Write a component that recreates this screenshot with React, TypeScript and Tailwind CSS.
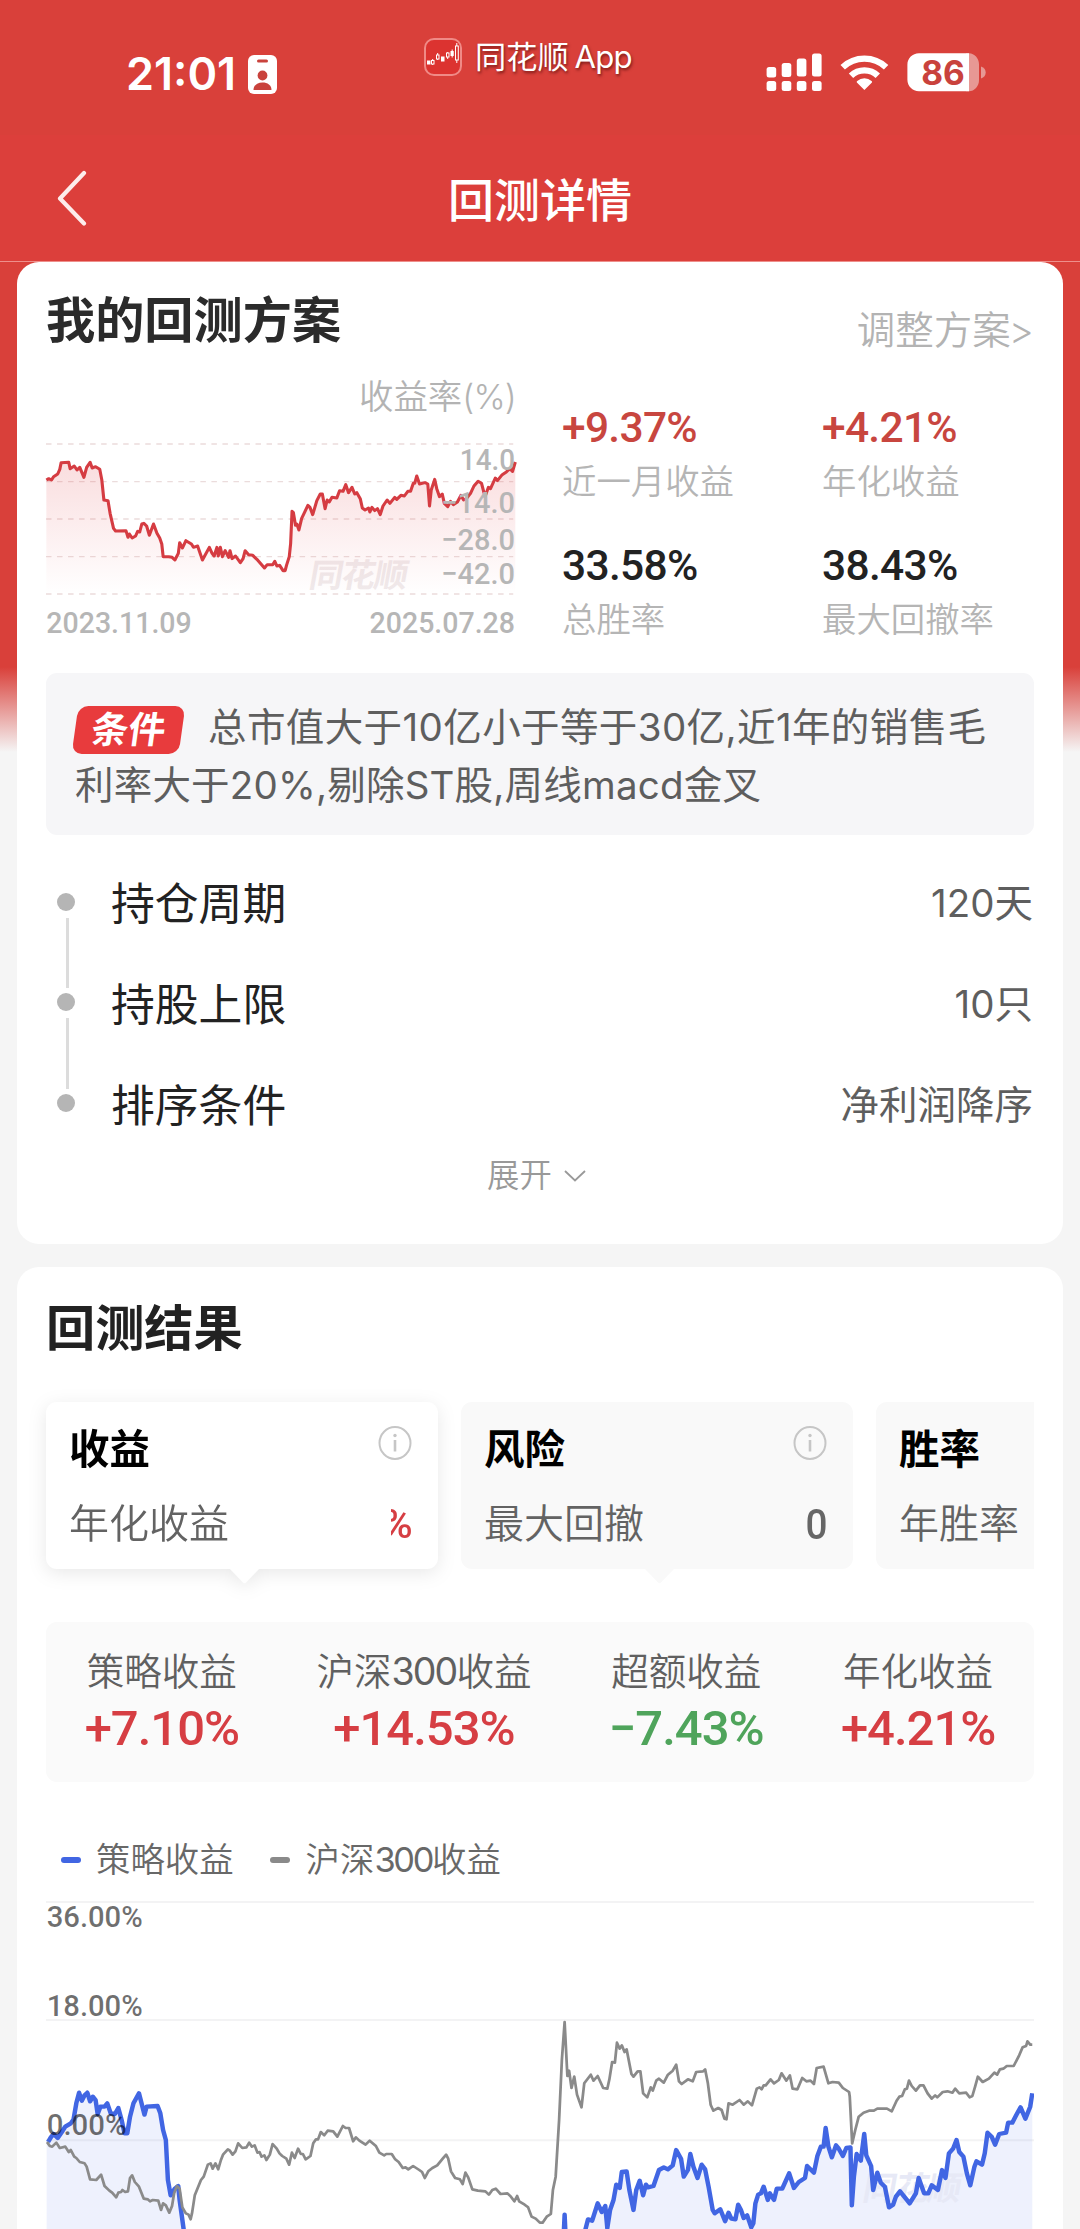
import React from 'react';

const PLAN_CURVE =
  '135,630 142,626 150,630 156,620 168,612 174,598 178,578 200,577 204,596 216,588 224,600 232,592 244,622 252,592 262,577 268,594 278,590 290,598 296,630 302,690 314,692 320,730 330,775 336,783 366,782 372,802 376,792 384,804 394,798 400,784 406,786 412,762 418,760 426,768 434,796 446,762 456,790 464,804 470,822 474,860 490,860 500,862 508,870 518,850 522,818 530,834 540,812 556,822 562,832 574,828 588,870 608,832 616,850 622,858 630,832 634,858 640,832 646,860 654,842 664,862 668,842 674,866 684,858 698,878 706,866 712,842 722,854 734,856 746,868 768,894 776,884 792,884 798,874 804,888 812,886 822,902 828,902 832,886 840,860 844,820 848,724 852,728 858,766 862,762 868,780 876,745 884,728 894,706 900,712 908,734 920,692 930,672 936,672 944,716 950,690 956,696 964,682 978,684 986,662 996,664 1004,644 1012,668 1022,652 1030,672 1036,668 1046,686 1052,714 1060,720 1070,714 1074,726 1080,712 1088,722 1096,716 1104,734 1112,708 1124,690 1132,700 1146,682 1152,688 1164,676 1174,678 1184,664 1192,664 1200,640 1204,640 1210,618 1218,642 1234,638 1242,642 1247,708 1252,660 1262,628 1268,656 1276,680 1284,672 1290,700 1300,710 1308,694 1316,704 1328,696 1338,676 1346,690 1354,686 1366,670 1376,648 1388,634 1398,640 1408,680 1418,652 1424,656 1438,624 1444,632 1458,614 1470,606 1480,596 1488,604 1496,576';

const INDEX_2024 =
  '137,1026 145,1038 152,1040 164,1028 174,1044 190,1040 200,1056 206,1050 216,1070 222,1074 232,1086 246,1090 252,1100 262,1138 280,1140 294,1124 304,1158 318,1172 326,1178 338,1192 344,1178 352,1176 356,1170 364,1176 372,1174 378,1134 384,1126 392,1146 404,1160 418,1196 430,1198 436,1204 444,1200 460,1202 468,1230 474,1210 482,1216 492,1238 500,1218 506,1180 514,1158 522,1166 530,1222 540,1240 548,1244 554,1258 558,1240 566,1186 584,1140 592,1130 604,1094 612,1090 618,1106 626,1090 634,1108 642,1080 648,1064 662,1048 668,1052 676,1064 684,1054 692,1030 704,1044 716,1042 724,1028 732,1040 740,1036 748,1058 754,1056 760,1070 768,1066 774,1080 784,1064 792,1032 804,1046 812,1060 820,1068 832,1076 840,1094 848,1058 856,1074 866,1046 874,1062 880,1062 888,1078 902,1068 910,1030 918,1018 924,1018 932,996 942,1006 952,992 968,994 980,1010 996,978 1004,984 1014,984 1026,1024 1034,1012 1044,1022 1062,1034 1074,1022 1092,1038 1102,1058 1116,1066 1122,1062 1138,1062 1148,1078 1158,1086 1170,1104 1178,1102 1186,1108 1200,1098 1218,1110 1226,1116 1234,1134 1244,1114 1256,1104 1270,1096 1286,1076 1296,1064 1302,1076 1310,1114 1322,1134 1336,1138 1344,1152 1352,1118 1360,1132 1372,1168 1388,1172 1410,1174 1420,1184 1430,1170 1440,1166 1454,1182 1474,1180 1484,1190 1494,1204 1502,1188 1508,1204 1524,1214 1534,1222 1544,1250 1556,1256 1568,1268';

const INDEX_2025 =
  '8,1268 20,1250 32,1242 38,1170 46,1130 56,960 64,780 72,666 80,828 85,812 92,864 100,830 108,884 121,922 129,850 148,824 156,842 168,828 184,864 196,866 202,838 210,786 218,788 224,728 232,746 238,736 246,756 252,748 266,822 272,830 284,814 292,814 300,880 312,892 322,862 328,872 338,842 346,836 360,848 372,824 386,812 396,794 404,844 412,852 430,838 444,844 454,816 474,814 480,808 488,850 496,914 504,932 518,924 528,930 536,956 542,958 548,910 560,914 580,900 592,914 604,904 616,916 630,866 638,862 644,868 650,856 656,856 670,838 680,850 694,840 702,820 716,842 726,826 734,866 748,868 762,834 774,844 786,842 796,852 804,804 824,800 838,850 850,846 868,848 880,864 898,876 900,890 907,1030 916,990 926,950 940,938 956,932 970,932 980,926 1008,926 1022,934 1036,902 1044,890 1052,888 1060,868 1066,866 1072,842 1080,858 1092,872 1104,856 1114,856 1126,880 1138,896 1148,886 1154,892 1170,876 1184,874 1198,878 1206,866 1218,880 1238,878 1248,892 1256,888 1264,860 1272,830 1286,846 1304,836 1320,818 1328,824 1336,808 1346,806 1356,798 1376,798 1392,766 1402,742 1412,738 1416,724 1424,734 1430,734';

const STRATEGY_2024 =
  '140,1026 148,1012 156,1002 168,1014 180,996 190,980 206,970 214,958 222,910 230,878 238,902 246,886 254,878 262,904 270,890 278,900 284,942 292,920 304,920 312,910 322,940 334,942 344,924 354,962 362,1000 370,1000 378,950 388,910 404,880 420,944 426,920 458,918 466,940 474,990 482,1020 488,1140 496,1186 508,1166 518,1158 522,1200 534,1290 560,1400';

const STRATEGY_2025 =
  '60,1400 70,1290 72,1244 74,1290 80,1400 120,1400 132,1290 140,1258 152,1262 168,1210 180,1236 190,1218 196,1284 204,1230 214,1200 222,1154 232,1164 238,1116 252,1114 260,1170 272,1230 280,1170 290,1142 300,1186 308,1154 314,1162 330,1158 346,1110 360,1102 372,1108 386,1096 396,1050 410,1076 418,1130 430,1110 437,1062 446,1100 458,1134 470,1094 480,1108 490,1160 502,1230 508,1240 524,1228 538,1264 548,1238 556,1256 568,1258 576,1214 584,1230 592,1254 602,1246 614,1282 620,1270 626,1210 634,1184 642,1180 650,1160 662,1200 668,1180 680,1200 688,1166 704,1166 724,1120 738,1164 752,1146 770,1134 776,1098 796,1118 806,1068 816,1040 824,1040 830,984 838,1040 848,1072 860,1036 868,1046 880,1068 890,1044 902,1042 906,1216 912,1130 920,1062 932,1082 942,1002 948,1066 962,1098 968,1170 980,1118 990,1148 1002,1160 1014,1222 1026,1214 1034,1190 1046,1174 1060,1192 1074,1210 1092,1180 1100,1134 1116,1180 1128,1180 1138,1156 1156,1170 1168,1110 1178,1134 1188,1060 1200,1046 1210,1020 1218,1056 1230,1070 1240,1120 1250,1156 1262,1100 1268,1084 1284,1094 1292,1060 1300,998 1312,1010 1322,1034 1334,1002 1354,998 1360,968 1372,968 1384,944 1396,922 1410,956 1424,920 1430,880';

// Second-half series start from x = 0 and are moved behind the first half
const shift = (points: string, dx: number) =>
  points
    .split(' ')
    .map((p) => {
      const [x, y] = p.split(',').map(Number);
      return `${x + dx},${y}`;
    })
    .join(' ');

const INDEX_CURVE = `${INDEX_2024} ${shift(INDEX_2025, 1568)}`;
const STRATEGY_CURVE = `${STRATEGY_2024} ${shift(STRATEGY_2025, 1568)}`;

const PLAN_STATS = [
  { value: '+9.37%', label: '近一月收益', color: 'text-[#c8463f]' },
  { value: '+4.21%', label: '年化收益', color: 'text-[#c8463f]' },
  { value: '33.58%', label: '总胜率', color: 'text-[#222222]' },
  { value: '38.43%', label: '最大回撤率', color: 'text-[#222222]' },
];

const PLAN_ROWS = [
  { label: '持仓周期', value: '120天' },
  { label: '持股上限', value: '10只' },
  { label: '排序条件', value: '净利润降序' },
];

const RESULT_STATS = [
  { label: '策略收益', value: '+7.10%', color: 'text-[#d63e43]' },
  {
    label: (
      <>
        沪深<span className="font-normal tracking-[-1.800px]">300</span>收益
      </>
    ),
    value: '+14.53%',
    color: 'text-[#d63e43]',
  },
  { label: '超额收益', value: '−7.43%', color: 'text-[#4fa45b]' },
  { label: '年化收益', value: '+4.21%', color: 'text-[#d63e43]' },
];

const StatusBar: React.FC = () => (
  <div className="flex h-[135px] items-start bg-[#d9403a] text-white">
    <div className="flex w-[424px] items-center gap-[12px] pt-[49px] pl-[126px]">
      <span className="text-[45px] leading-[50px] font-semibold">21:01</span>
      <svg width="29" height="39" viewBox="0 0 29 39">
        <rect width="29" height="39" rx="6" fill="#fff" />
        <rect x="9" y="4.5" width="11" height="3" rx="1.5" fill="#c9423c" />
        <circle cx="14.5" cy="20.5" r="4.9" fill="#c9423c" />
        <path d="M5.5 35c0-5 4-7.6 9-7.6s9 2.6 9 7.6z" fill="#c9423c" />
      </svg>
    </div>
    <div className="flex w-[342px] items-center gap-[13px] pt-[37px]">
      <svg width="38" height="38" viewBox="0 0 38 38" fill="none">
        <rect x="1" y="1" width="36" height="36" rx="9" fill="#dc3330" stroke="#f08a86" strokeWidth="2" />
        <g stroke="#fff" strokeWidth="1">
          <rect x="3.5" y="23" width="2.5" height="3" fill="#fff" />
          <path d="M8.7 21v6" />
          <rect x="7.5" y="22.5" width="2.5" height="3.5" fill="#dc3330" />
          <path d="M13.7 15v7" />
          <rect x="12.5" y="17" width="2.5" height="4" fill="#dc3330" />
          <rect x="17.5" y="19" width="2.5" height="4" fill="#fff" />
          <path d="M23.7 14v7" />
          <rect x="22.5" y="15" width="2.5" height="4" fill="#dc3330" />
          <path d="M28.2 11.5v8" />
          <rect x="27" y="13.5" width="2.2" height="4" fill="#fff" />
          <path d="M32.8 5v20" />
          <rect x="31.5" y="8" width="2.8" height="14" fill="#dc3330" />
        </g>
      </svg>
      <span className="text-[31.200px] leading-[40px] whitespace-nowrap [text-shadow:1px_2px_3px_rgba(60,0,0,0.6)]">
        同花顺<span className="ml-[6px] tracking-[-0.900px]">App</span>
      </span>
    </div>
    <svg className="mt-[50px]" width="222" height="46" viewBox="766 50 222 46">
      <g fill="#fff">
        <rect x="766.6" y="67" width="9.6" height="10.5" rx="2.5" />
        <rect x="781.7" y="63" width="9.6" height="14" rx="2.5" />
        <rect x="796.8" y="58.5" width="9.6" height="18" rx="2.5" />
        <rect x="812" y="53.5" width="9.6" height="23" rx="2.5" />
        <rect x="766.6" y="81" width="9.6" height="10" rx="2.5" />
        <rect x="781.7" y="81" width="9.6" height="10" rx="2.5" />
        <rect x="796.8" y="81" width="9.6" height="10" rx="2.5" />
        <rect x="812" y="81" width="9.6" height="10" rx="2.5" />
        <path d="M864.4 90l-7.3-7.3c-.6-.6-.5-1.3.1-1.8a11.5 11.5 0 0 1 14.4 0c.6.5.7 1.2.1 1.8z" />
      </g>
      <g fill="none" stroke="#fff" strokeWidth="6.4">
        <path d="M842.7 67.3a31.5 31.5 0 0 1 43.4 0" />
        <path d="M851 75.7a19.5 19.5 0 0 1 26.8 0" />
      </g>
      <path d="M969 53.3h-3v37.9h3c5.5 0 10-5 10-11V64.3c0-6-4.5-11-10-11z" fill="#e79894" />
      <path d="M918.9 53.3H969v37.9h-50.1c-6.4 0-11.5-5-11.5-11.4V64.7c0-6.4 5.1-11.4 11.5-11.4z" fill="#fff" />
      <path d="M981 66.5c3 .8 4.7 3.3 4.7 6s-1.7 5.2-4.7 6z" fill="#e79894" />
      <text x="943" y="85" textAnchor="middle" fontSize="33.5" fontWeight="700" fill="#c9423c">
        86
      </text>
    </svg>
  </div>
);

const NavBar: React.FC = () => (
  <div className="grid h-[127px] grid-cols-3 items-center border-b border-[#ee8f8b] bg-[#dc3f3b] text-white">
    <svg className="ml-[55px]" width="34" height="56" viewBox="0 0 34 56" fill="none">
      <path d="M29 3L5 28.5l24 25" stroke="#fdeceb" strokeWidth="4.2" strokeLinecap="round" strokeLinejoin="round" />
    </svg>
    <h1 className="pt-[4px] text-center text-[46px] leading-[60px] font-medium">回测详情</h1>
  </div>
);

const PlanChart: React.FC = () => (
  <svg
    className="mt-[23px] overflow-visible"
    width="470"
    height="200"
    viewBox="134 510 1364 600"
    preserveAspectRatio="none"
  >
    <defs>
      <linearGradient id="planFill" x1="0" y1="0" x2="0" y2="1">
        <stop offset="0" stopColor="#e0383f" stopOpacity="0.17" />
        <stop offset="1" stopColor="#e0383f" stopOpacity="0" />
      </linearGradient>
    </defs>
    <g stroke="#ebdcdc" strokeWidth="4" strokeDasharray="16 16">
      {[522, 635, 747, 860, 972].map((y) => (
        <line key={y} x1="134" x2="1490" y1={y} y2={y} />
      ))}
    </g>
    <text x="893" y="950" fontSize="98" fontWeight="700" textLength="286" fill="#f0eaeb" transform="translate(168 0) skewX(-10)">
      同花顺
    </text>
    <polygon points={`135,972 ${PLAN_CURVE} 1496,972`} fill="url(#planFill)" />
    <polyline points={PLAN_CURVE} fill="none" stroke="#d53c42" strokeWidth="9" strokeLinejoin="round" />
    <g fill="#b6b6b6" fontSize="91" fontWeight="500" fontFamily="Roboto, sans-serif">
      <text x="1335" y="600" textLength="160" lengthAdjust="spacingAndGlyphs">14.0</text>
      <text x="1281" y="728" textLength="214" lengthAdjust="spacingAndGlyphs">−14.0</text>
      <text x="1281" y="839" textLength="214" lengthAdjust="spacingAndGlyphs">−28.0</text>
      <text x="1281" y="943" textLength="214" lengthAdjust="spacingAndGlyphs">−42.0</text>
      <text x="135" y="1090" textLength="422" lengthAdjust="spacingAndGlyphs">2023.11.09</text>
      <text x="1073" y="1090" textLength="422" lengthAdjust="spacingAndGlyphs">2025.07.28</text>
    </g>
  </svg>
);

const ResultChart: React.FC = () => (
  <svg className="mt-[15px]" width="988" height="334" viewBox="134 285 2869 1002" preserveAspectRatio="none">
    <g stroke="#f3f3f4" strokeWidth="6">
      {[306, 660, 1021].map((y) => (
        <line key={y} x1="134" x2="3003" y1={y} y2={y} />
      ))}
    </g>
    <polygon points={`136,1500 136,1026 ${STRATEGY_CURVE} 2998,1500`} fill="#4669e8" fillOpacity="0.09" />
    <text x="2501" y="1200" fontSize="98" fontWeight="700" textLength="286" fill="#e7e9f6" transform="translate(212 0) skewX(-10)">
      同花顺
    </text>
    <polyline points={STRATEGY_CURVE} fill="none" stroke="#4166e3" strokeWidth="13" strokeLinejoin="round" />
    <polyline points={INDEX_CURVE} fill="none" stroke="#8a8a8a" strokeWidth="8" strokeLinejoin="round" />
    <g fill="#000000" fillOpacity="0.57" fontSize="90" fontWeight="500" fontFamily="Roboto, sans-serif">
      <text x="136" y="382" textLength="279" lengthAdjust="spacingAndGlyphs">36.00%</text>
      <text x="136" y="647" textLength="279" lengthAdjust="spacingAndGlyphs">18.00%</text>
      <text x="136" y="1005" textLength="232" lengthAdjust="spacingAndGlyphs">0.00%</text>
    </g>
  </svg>
);

const InfoIcon: React.FC = () => (
  <svg className="mr-px" width="34" height="36" viewBox="0 0 34 36" fill="none" stroke="#c6c6c6">
    <ellipse cx="17" cy="18" rx="15.5" ry="16" strokeWidth="2" />
    <path d="M17 15v11.5" strokeWidth="2.6" />
    <circle cx="17" cy="10.5" r="1.7" fill="#c6c6c6" stroke="none" />
  </svg>
);

interface TabCardProps {
  title: string;
  label: string;
  active?: boolean;
  children?: React.ReactNode;
}

const TabCard: React.FC<TabCardProps> = ({ title, label, active, children }) => (
  <div className={active ? 'relative shrink-0 drop-shadow-[0_4px_9px_rgba(0,0,0,0.09)]' : 'relative shrink-0'}>
    <div
      className={`h-[167px] w-[391.600px] rounded-[11px] pt-[23px] pr-[25px] pl-[23px] ${
        active ? 'bg-white' : 'bg-[#f9f9f9]'
      }`}
    >
      <div className="flex items-start justify-between">
        <span className="text-[40.500px] leading-[50px] font-bold text-black">{title}</span>
        <InfoIcon />
      </div>
      <div className="mt-[24px] flex items-center justify-between leading-[50px]">
        <span className="text-[40px] font-[350] whitespace-nowrap text-[#636363]">{label}</span>
        {children}
      </div>
    </div>
    <svg className="absolute top-[166px] left-[183px]" width="31" height="16" viewBox="0 0 31 16">
      <path d="M0 0h31L17 14.5q-1.5 1.5-3 0z" fill={active ? '#ffffff' : '#f9f9f9'} />
    </svg>
  </div>
);

const PlanCard: React.FC = () => (
  <section className="mx-[17px] h-[982px] rounded-[22px] bg-white px-[29px] pt-[28px]">
    <div className="flex h-[59px] items-start justify-between">
      <h2 className="text-[49.200px] leading-[61px] font-bold text-[#2b2b2b]">我的回测方案</h2>
      <span className="mt-[10px] text-[38.500px] leading-[60px] font-[350] text-[#b3b3b3]">
        调整方案<span className="-ml-[2px]">&gt;</span>
      </span>
    </div>

    <div className="flex">
      <div className="w-[470px] pt-[28px]">
        <div className="text-right text-[34.400px] leading-[40px] font-[350] text-[#b3b3b3]">
          收益率<span className="tracking-[-0.800px]">(%)</span>
        </div>
        <PlanChart />
      </div>
      <div className="ml-[46px] grid grid-cols-[260px_200px] content-start gap-y-[39px] pt-[54px]">
        {PLAN_STATS.map((stat) => (
          <div key={stat.label} className="whitespace-nowrap">
            <div className={`font-[Roboto] text-[42.500px] leading-[50px] font-medium tracking-[-0.7px] ${stat.color}`}>
              {stat.value}
            </div>
            <div className="mt-[9px] text-[34.400px] leading-[40px] font-[350] text-[#b5b5b5]">{stat.label}</div>
          </div>
        ))}
      </div>
    </div>

    <div className="mt-[33px] h-[162px] rounded-[11px] bg-[#f6f6f8] px-[29px] pt-[25px] text-[38.500px] leading-[58px] whitespace-nowrap text-[#5e5e5e]">
      <div className="flex items-center">
        <span className="mt-[5px] mr-[26px] flex h-[48px] w-[107px] -skew-x-8 items-center justify-center rounded-[10px] bg-[#e83b3d] text-[37px] leading-[48px] font-bold text-white">
          条件
        </span>
        <span className="tracking-[0.400px]">总市值大于10亿小于等于30亿,近1年的销售毛</span>
      </div>
      <div className="tracking-[0.200px]">利率大于20%,剔除ST股,周线macd金叉</div>
    </div>

    <div className="mt-[18px] flex">
      <div className="ml-[11px] flex w-[18px] flex-col items-center pt-[40px]">
        <span className="h-[18px] w-[18px] rounded-full bg-[#b5b5b5]" />
        <span className="mt-[7px] mb-[5px] ml-[3px] h-[70px] w-[3px] bg-[#dcdcdc]" />
        <span className="h-[18px] w-[18px] rounded-full bg-[#b5b5b5]" />
        <span className="mt-[7px] mb-[5px] ml-[3px] h-[71px] w-[3px] bg-[#dcdcdc]" />
        <span className="h-[18px] w-[18px] rounded-full bg-[#b5b5b5]" />
      </div>
      <div className="ml-[36px] flex-1 pr-px">
        {PLAN_ROWS.map((row) => (
          <div key={row.label} className="flex h-[100.600px] items-center justify-between pt-[2px]">
            <span className="mt-[2px] text-[43.800px] text-[#222222]">{row.label}</span>
            <span className="text-[38.500px] text-[#5e5e5e]">{row.value}</span>
          </div>
        ))}
      </div>
    </div>

    <button className="flex w-full items-center justify-center gap-[12px] pt-px pr-[7px] text-[32.400px] leading-[40px] font-[350] text-[#999999]">
      展开
      <svg width="22" height="12" viewBox="0 0 22 12" fill="none">
        <path d="M1 1l10 9.5L21 1" stroke="#999999" strokeWidth="1.8" />
      </svg>
    </button>
  </section>
);

const ResultCard: React.FC = () => (
  <section className="mx-[17px] mt-[23px] h-[1000px] rounded-[22px] bg-white px-[29px] pt-[32px]">
    <h2 className="text-[49.200px] leading-[59px] font-bold text-[#222222]">回测结果</h2>

    <div className="mt-[20px] -ml-[29px] flex gap-[23.400px] overflow-hidden pt-[24px] pb-[40px] pl-[29px]">
      <TabCard title="收益" label="年化收益" active>
        {/* the value is wider than its slot, only the tail stays visible */}
        <span className="flex w-[22px] justify-end overflow-hidden font-[Roboto] text-[41px] font-medium text-[#d63e43]">
          %
        </span>
      </TabCard>
      <TabCard title="风险" label="最大回撤">
        <span className="origin-right scale-x-90 font-[Roboto] text-[43px] font-medium text-[#666666]">0</span>
      </TabCard>
      <TabCard title="胜率" label="年胜率" />
    </div>

    <div className="mt-[13px] flex h-[160px] justify-around rounded-[11px] bg-[#fafafa] pt-[27px]">
      {RESULT_STATS.map((stat) => (
        <div key={stat.value} className="text-center whitespace-nowrap">
          <div className="text-[37.500px] leading-[46px] font-[350] text-[#606060]">{stat.label}</div>
          <div className={`mt-[4px] font-[Roboto] text-[49px] leading-[60px] font-medium tracking-[-1px] ${stat.color}`}>
            {stat.value}
          </div>
        </div>
      ))}
    </div>

    <div className="mt-[58px] flex items-center pl-[15px] text-[34.400px] leading-[40px] font-[350] text-[#686868]">
      <span className="mr-[15px] h-[6px] w-[20px] rounded-full bg-[#4166e3]" />
      策略收益
      <span className="mr-[16px] ml-[36px] h-[6px] w-[20px] rounded-full bg-[#8a8a8a]" />
      <span>
        沪深<span className="font-normal tracking-[-2.300px]">300</span>收益
      </span>
    </div>
    <ResultChart />
  </section>
);

export default function App() {
  return (
    <div className="h-[2229px] w-[1080px] overflow-hidden bg-[#f5f5f5] bg-[linear-gradient(#d9403a_667px,#f5f5f5_752px)] font-[Inter,'Noto_Sans_CJK_SC',sans-serif]">
      <StatusBar />
      <NavBar />
      <PlanCard />
      <ResultCard />
    </div>
  );
}
